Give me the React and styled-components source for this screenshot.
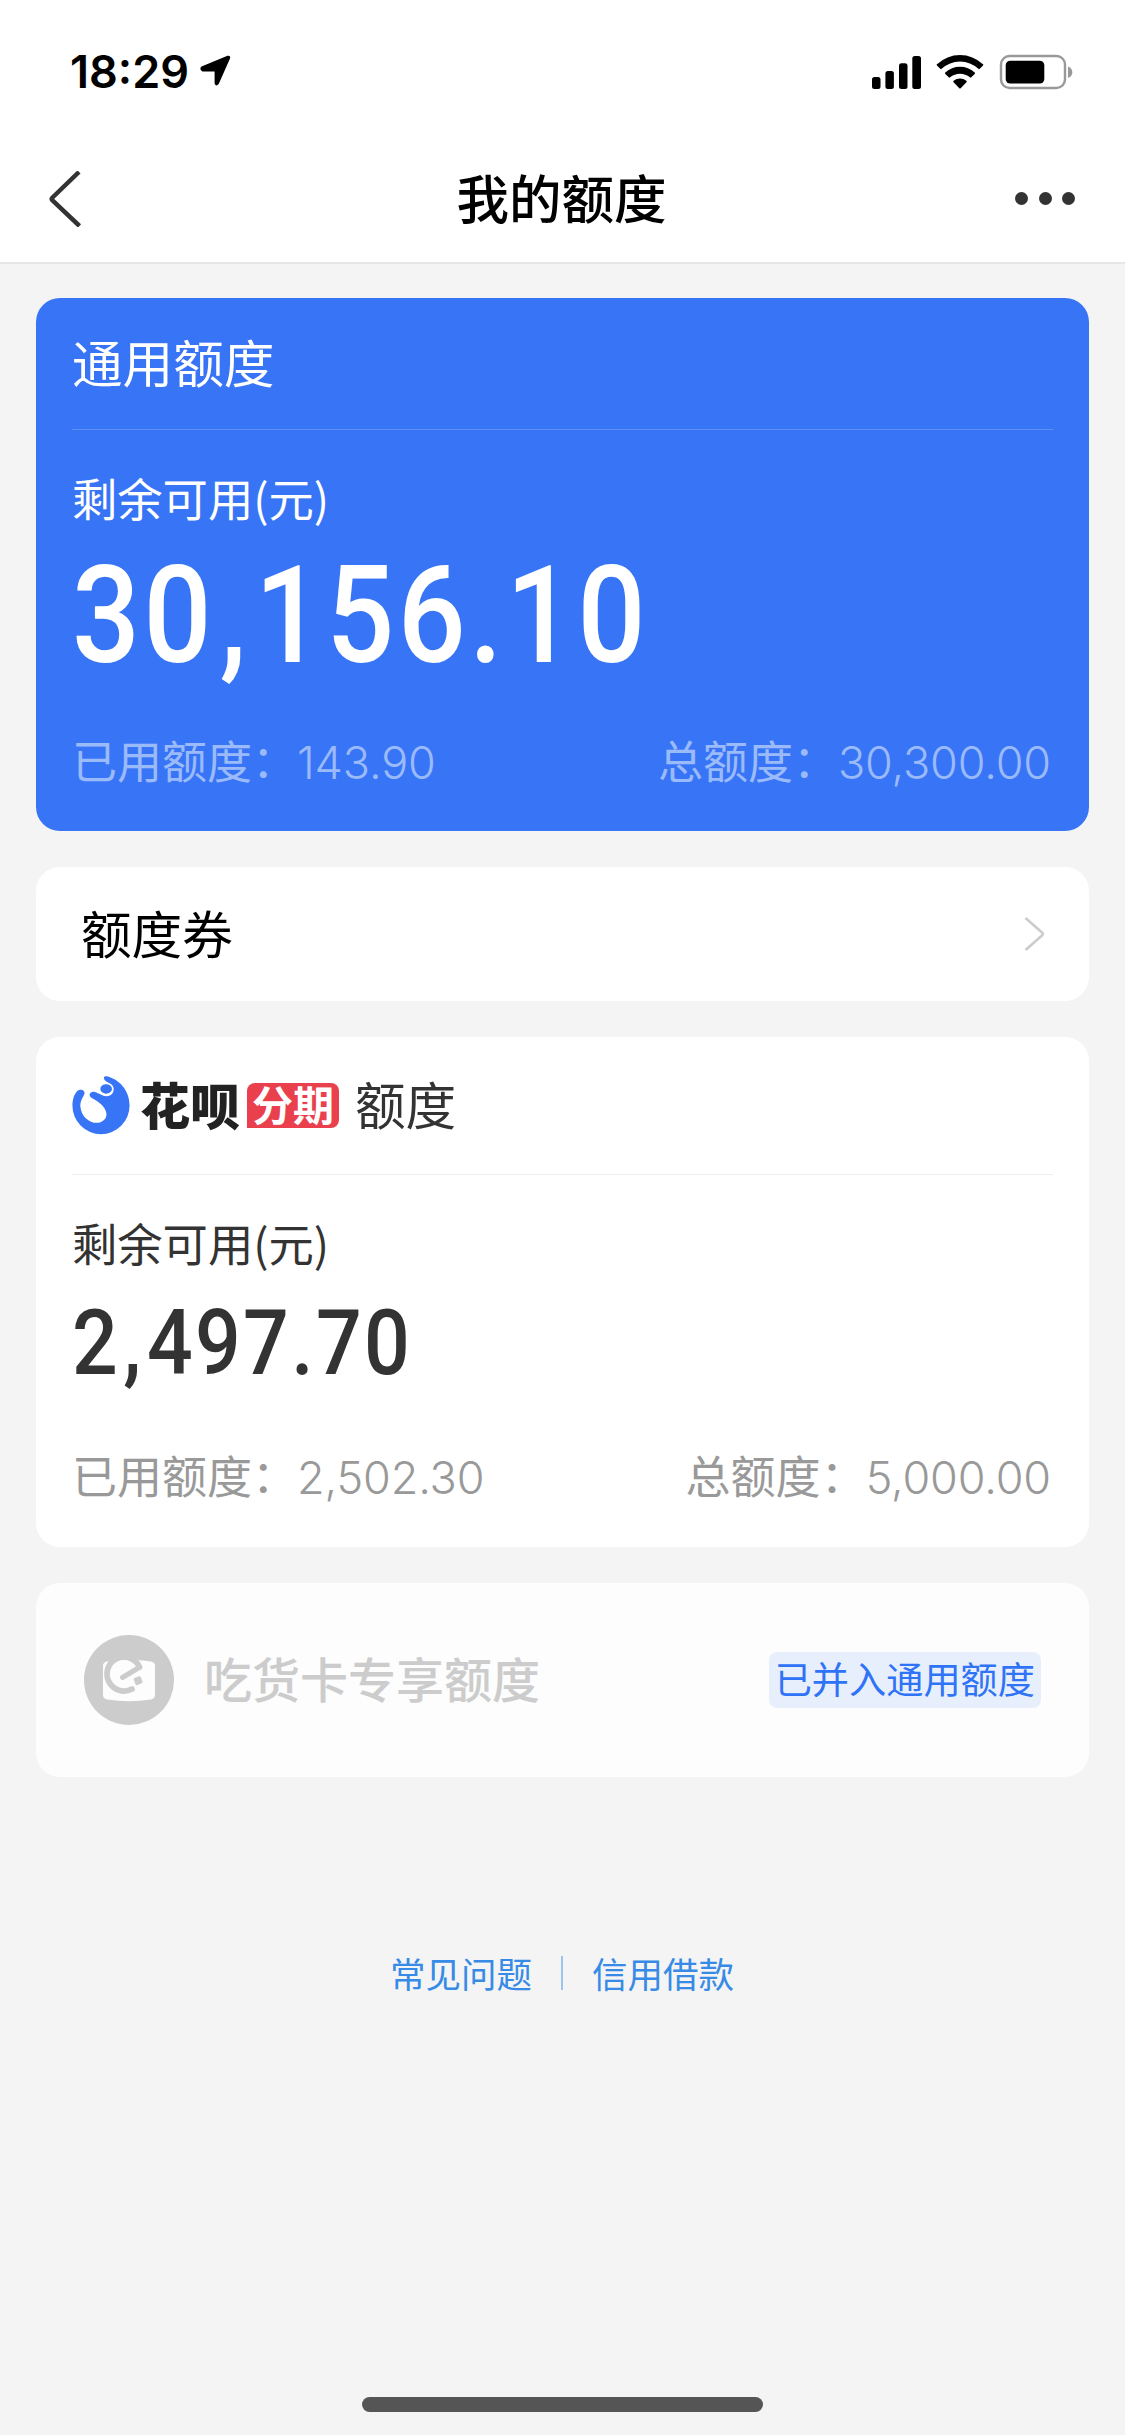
import React from 'react';
import styled, { createGlobalStyle } from 'styled-components';

const cjk = `'Noto Sans CJK SC', sans-serif`;

const GlobalStyle = createGlobalStyle`
	* {
		box-sizing: border-box;
	}

	body {
		margin: 0;
		background: #f4f4f4;
		font-family: ${cjk};
		color: #333;
	}
`;

let quotas = {
	general: {
		left: '30,156.10',
		used: '143.90',
		total: '30,300.00',
	},
	huabei: {
		left: '2,497.70',
		used: '2,502.30',
		total: '5,000.00',
	},
};

let links = ['常见问题', '信用借款'];

const Amount = ({ value, big }) => (
	<AmountText $big={big}>
		{value.split(/(,)/).map((part, i) =>
			part === ',' ? <Comma key={i}>,</Comma> : part
		)}
	</AmountText>
);

const Usage = ({ used, total, light }) => (
	<UsageRow $light={light}>
		<div>
			已用额度<Colon>：</Colon>
			<Num>{used}</Num>
		</div>
		<div>
			总额度<Colon>：</Colon>
			<Num>{total}</Num>
		</div>
	</UsageRow>
);

const StatusIcons = () => (
	<svg width="202" height="36" viewBox="0 0 202 36">
		<rect x="1" y="23" width="8.5" height="12" rx="2.5" />
		<rect x="14.4" y="17" width="8.5" height="18" rx="2.5" />
		<rect x="28" y="9.3" width="8.5" height="25.7" rx="2.5" />
		<rect x="41.3" y="2" width="8.7" height="33" rx="2.5" />
		<path d="M66 11.6a1 1 0 0 1 0-1.4a33.5 33.5 0 0 1 46 0a1 1 0 0 1 0 1.4l-3.2 3.2a1 1 0 0 1-1.4 0a27 27 0 0 0-36.8 0a1 1 0 0 1-1.4 0z" />
		<path d="M74.3 19.9a1 1 0 0 1 0-1.4a22 22 0 0 1 29.4 0a1 1 0 0 1 0 1.4l-3.4 3.4a1 1 0 0 1-1.4 0a15.5 15.5 0 0 0-19.8 0a1 1 0 0 1-1.4 0z" />
		<path d="M82.6 28.2a1 1 0 0 1 0-1.4a10.5 10.5 0 0 1 12.8 0a1 1 0 0 1 0 1.4l-5.7 6a1 1 0 0 1-1.4 0z" />
		<rect x="130" y="2" width="64" height="32" rx="8.5" fill="none" stroke="#999" strokeWidth="2.4" />
		<rect x="134.7" y="6.8" width="38.6" height="22.8" rx="4.5" />
		<path d="M197 12.5c3 1 4.3 3.2 4.3 5.7s-1.3 4.7-4.3 5.7z" fill="#999" />
	</svg>
);

const HuabeiLogo = () => (
	<svg width="58" height="58.5" viewBox="35 49 174 176">
		<path
			fill="#3875f6"
			d="M139 50C176 58 208 92 208 138A86 86 0 0 1 36 138C36 118 42 104 50 95C59 85 76 92 72 104C67 115 59 124 60 142C63 170 86 190 109 190C128 189 141 176 138 160C135 142 116 126 94 115C82 108 89 93 104 97C117 101 126 109 138 110C155 109 163 97 159 82C155 71 142 69 135 63C127 56 131 49 139 50Z"
		/>
		<ellipse cx="137.5" cy="88" rx="17.5" ry="14.5" fill="#3875f6" />
	</svg>
);

const FoodieLogo = () => (
	<svg width="90" height="90" viewBox="0 0 90 90">
		<circle cx="45" cy="45" r="45" fill="#ccc" />
		<path
			fill="#fdfdfd"
			d="M23 26.5C38 24.6 52 24.6 67 26.5Q71 27 71 31V60Q71 63.5 67 64.5Q45 68 23 64.5Q19 63.5 19 60V31Q19 27 23 26.5Z"
		/>
		<path
			d="M55.5 32A17 17 0 1 0 48 54"
			fill="none"
			stroke="#ccc"
			strokeWidth="5.8"
			strokeLinecap="round"
		/>
		<path d="M38.5 42.5L55 32.5" stroke="#ccc" strokeWidth="5" strokeLinecap="round" />
		<rect x="50.5" y="42" width="7.5" height="7.5" rx="1.5" transform="rotate(-22 54 46)" fill="#ccc" />
	</svg>
);

const App = () => {
	return (
		<Page>
			<GlobalStyle />

			<StatusBar>
				<Clock>
					18:29
					<svg width="31" height="31" viewBox="0 0 31 31">
						<path d="M1.5 11.5L27.5 .8Q31 0 30 3.5L18.7 29Q16 32 14.6 28.5V16.6H2.5Q-1.2 14 1.5 11.5Z" />
					</svg>
				</Clock>
				<StatusIcons />
			</StatusBar>

			<Header>
				<svg width="34" height="56" viewBox="0 0 34 56" fill="none" stroke="#333" strokeWidth="4.5">
					<path d="M31 1L4.5 26.5Q3 28 4.5 29.5L31.5 55" />
				</svg>
				<Title>我的额度</Title>
				<Dots>
					<i />
					<i />
					<i />
				</Dots>
			</Header>

			<Cards>
				<Card $blue $height={533}>
					<CardHead $blue>
						<HeadText>通用额度</HeadText>
					</CardHead>
					<Label>剩余可用(元)</Label>
					<Amount value={quotas.general.left} big />
					<Usage used={quotas.general.used} total={quotas.general.total} light />
				</Card>

				<Coupon>
					<HeadText>额度券</HeadText>
					<svg width="22" height="36" viewBox="0 0 22 36" fill="none" stroke="#ccc" strokeWidth="2.6">
						<path d="M2.5 2L19 16.5Q20.5 18 19 19.5L2.5 34" />
					</svg>
				</Coupon>

				<Card $height={510}>
					<CardHead>
						<HuabeiLogo />
						<Brand>花呗</Brand>
						<Badge>分期</Badge>
						<HeadText>额度</HeadText>
					</CardHead>
					<Label>剩余可用(元)</Label>
					<Amount value={quotas.huabei.left} />
					<Usage used={quotas.huabei.used} total={quotas.huabei.total} />
				</Card>

				<Merged>
					<FoodieLogo />
					<MergedName>吃货卡专享额度</MergedName>
					<Tag>已并入通用额度</Tag>
				</Merged>
			</Cards>

			<Links>
				{links.map((link) => (
					<a key={link}>{link}</a>
				))}
			</Links>

			<HomeBar />
		</Page>
	);
};

const Page = styled.div`
	width: 1125px;
	height: 2435px;
	display: flex;
	flex-direction: column;
	overflow: hidden;
`;

const StatusBar = styled.div`
	height: 132px;
	padding: 11px 52px 0 70px;
	display: flex;
	justify-content: space-between;
	align-items: center;
	background: #fff;
	color: #000;
`;

const Clock = styled.div`
	display: flex;
	align-items: center;
	gap: 11px;
	font: 600 45px/54px Inter, sans-serif;

	svg {
		margin-bottom: 2px;
	}
`;

const Header = styled.div`
	height: 132px;
	padding: 3px 50px 0 48px;
	display: grid;
	grid-template-columns: 1fr auto 1fr;
	align-items: center;
	background: #fff;
	border-bottom: 2px solid #e6e6e6;
`;

const Title = styled.h1`
	margin: 0;
	padding-bottom: 6px;
	font-size: 52.5px;
	font-weight: 500;
	line-height: 76px;
	color: #000;
`;

const Dots = styled.div`
	display: flex;
	justify-content: flex-end;
	gap: 10.5px;

	i {
		width: 13px;
		height: 13px;
		border-radius: 50%;
		background: #333;
	}
`;

const Cards = styled.div`
	padding: 34px 36px 0;
	display: flex;
	flex-direction: column;
	gap: 36px;
`;

const Card = styled.section`
	height: ${(p) => p.$height}px;
	padding: 0 36px;
	border-radius: 24px;
	background: ${(p) => (p.$blue ? '#3875f6' : '#fff')};
	color: ${(p) => (p.$blue ? '#fff' : '#333')};
`;

const CardHead = styled.div`
	height: ${(p) => (p.$blue ? 132 : 138)}px;
	display: flex;
	align-items: center;
	border-bottom: 1px solid ${(p) => (p.$blue ? '#5e90f8' : '#eee')};
`;

const HeadText = styled.span`
	padding-bottom: 5px;
	font-size: 50.6px;
	line-height: 74px;
`;

const Label = styled.div`
	margin-top: 35px;
	font-size: 45.3px;
	line-height: 64px;
`;

const AmountText = styled.div`
	width: max-content;
	margin-top: ${(p) => (p.$big ? 19 : 22)}px;
	font-family: Roboto, sans-serif;
	font-weight: 500;
	font-size: ${(p) => (p.$big ? 136 : 91.5)}px;
	line-height: ${(p) => (p.$big ? 136 : 94)}px;
	letter-spacing: 0.029em;
	transform: scaleX(0.88);
	transform-origin: left;
`;

const Comma = styled.span`
	margin: 0 0.04em 0 0.04em;
`;

const UsageRow = styled.div`
	margin-top: ${(p) => (p.$light ? 44 : 53)}px;
	padding-right: 2px;
	display: flex;
	justify-content: space-between;
	font-size: 45px;
	line-height: 64px;
	color: ${(p) => (p.$light ? '#9bbafa' : '#999')};
`;

const Colon = styled.span`
	vertical-align: 1px;
	line-height: 0;
`;

const Num = styled.span`
	font-family: Inter, sans-serif;
	font-weight: 350;
	line-height: 0;
	letter-spacing: -0.003em;
`;

const Coupon = styled.div`
	height: 134px;
	padding: 0 44px 0 45px;
	display: flex;
	justify-content: space-between;
	align-items: center;
	border-radius: 24px;
	background: #fff;
	color: #000;
`;

const Brand = styled.span`
	margin-left: 10px;
	padding-bottom: 6px;
	font-size: 50px;
	font-weight: 800;
	line-height: 74px;
	color: #222;
`;

const Badge = styled.span`
	width: 92px;
	height: 45px;
	margin: 0 16px 0 7px;
	border-radius: 8px 8px 8px 0;
	background: #ea404d;
	color: #fff;
	font-size: 41px;
	font-weight: 700;
	line-height: 41px;
	text-align: center;
`;

const Merged = styled.div`
	height: 194px;
	padding: 0 48px;
	display: flex;
	align-items: center;
	border-radius: 24px;
	background: #fdfdfd;
`;

const MergedName = styled.span`
	margin: 0 auto 0 30px;
	padding-bottom: 6px;
	font-size: 48px;
	font-weight: 500;
	color: #ccc;
`;

const Tag = styled.span`
	height: 56px;
	padding: 0 6px;
	border-radius: 8px;
	background: #e8effc;
	color: #2f73f6;
	font-size: 37.2px;
	line-height: 53px;
`;

const Links = styled.div`
	margin-top: 170px;
	padding-right: 1px;
	display: flex;
	justify-content: center;
	align-items: center;
	font-size: 35.5px;
	line-height: 52px;
	color: #378be6;

	a + a {
		display: flex;
		align-items: center;
	}

	a + a::before {
		content: '';
		width: 2px;
		height: 34px;
		margin: 0 29px 0 29px;
		background: #9cc4ef;
	}
`;

const HomeBar = styled.div`
	width: 401px;
	height: 15px;
	margin: auto auto 23px;
	border-radius: 8px;
	background: #555;
`;

export default App;
